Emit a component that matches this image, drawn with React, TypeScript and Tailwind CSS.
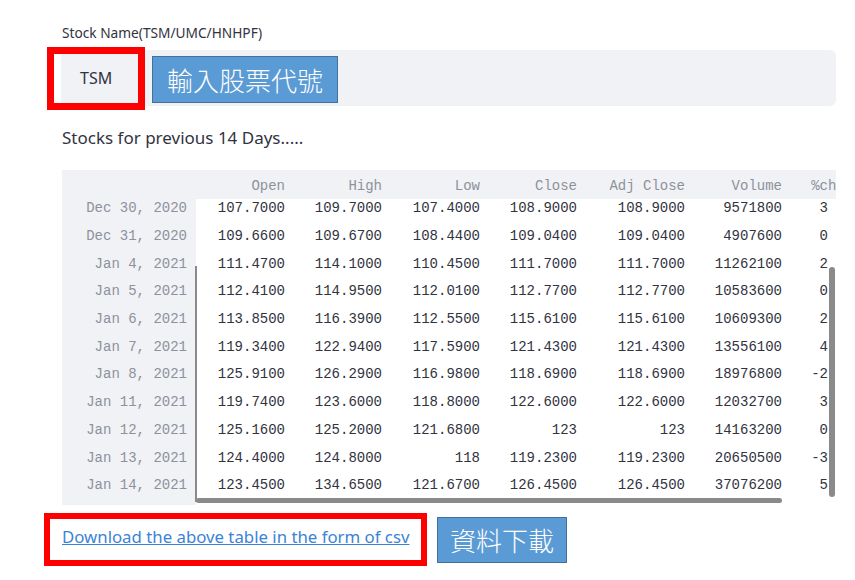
import React from "react";

const cols = [
  { name: "Open", w: 100 },
  { name: "High", w: 97 },
  { name: "Low", w: 98 },
  { name: "Close", w: 97 },
  { name: "Adj Close", w: 108 },
  { name: "Volume", w: 97 },
  { name: "%change", w: 88 },
];

const rows: string[][] = [
  ["Dec 30, 2020", "107.7000", "109.7000", "107.4000", "108.9000", "108.9000", "9571800", "3.2196"],
  ["Dec 31, 2020", "109.6600", "109.6700", "108.4400", "109.0400", "109.0400", "4907600", "0.1286"],
  ["Jan 4, 2021", "111.4700", "114.1000", "110.4500", "111.7000", "111.7000", "11262100", "2.4312"],
  ["Jan 5, 2021", "112.4100", "114.9500", "112.0100", "112.7700", "112.7700", "10583600", "0.9579"],
  ["Jan 6, 2021", "113.8500", "116.3900", "112.5500", "115.6100", "115.6100", "10609300", "2.5183"],
  ["Jan 7, 2021", "119.3400", "122.9400", "117.5900", "121.4300", "121.4300", "13556100", "4.8006"],
  ["Jan 8, 2021", "125.9100", "126.2900", "116.9800", "118.6900", "118.6900", "18976800", "-2.2564"],
  ["Jan 11, 2021", "119.7400", "123.6000", "118.8000", "122.6000", "122.6000", "12032700", "3.2943"],
  ["Jan 12, 2021", "125.1600", "125.2000", "121.6800", "123", "123", "14163200", "0.3263"],
  ["Jan 13, 2021", "124.4000", "124.8000", "118", "119.2300", "119.2300", "20650500", "-3.0650"],
  ["Jan 14, 2021", "123.4500", "134.6500", "121.6700", "126.4500", "126.4500", "37076200", "5.8934"],
];

const sans = { fontFamily: '"Noto Sans", "Open Sans", sans-serif' };
const mono = { fontFamily: '"Liberation Mono", "DejaVu Sans Mono", monospace' };
const cjk = { fontFamily: '"Noto Sans CJK TC", "Noto Sans CJK SC", sans-serif' };

export default function App() {
  return (
    <div className="relative w-[855px] h-[580px] bg-white overflow-hidden text-[#31333f]" style={sans}>
      <div className="ml-[62px] w-[774px] flex flex-col">
        <div className="pt-[25px] h-[41px] text-[13.7px] leading-4 text-[#31333f] whitespace-nowrap">Stock Name(TSM/UMC/HNHPF)</div>

        <div className="relative -ml-px mt-[9px] w-[775px] h-[56px] rounded-md bg-[#f0f2f6] flex items-start">
          <span className="mt-[17px] ml-[19px] w-[72px] text-[16px] leading-[22px] text-[#31333f]">TSM</span>
          <div
            className="mt-[6px] w-[186px] h-[47px] bg-[#5b9bd5] border border-[#41719c] text-white text-[26px] leading-none font-light flex items-center justify-center"
            style={cjk}
          >
            輸入股票代號
          </div>
          <div className="absolute left-[-14px] top-[-3px] w-[98px] h-[63px] border-[7px] border-[#ff0000]" />
        </div>

        <div className="mt-[20px] h-6 text-[17px] leading-6 text-[#31333f] whitespace-nowrap">Stocks for previous 14 Days.....</div>

        <div className="relative mt-[20px] w-[774px] h-[335px] overflow-hidden bg-[#f0f2f6] text-[14px]" style={mono}>
          <div className="flex h-[29px] items-end pb-[3px] text-[#8e919b] whitespace-nowrap">
            <div className="w-[134px] shrink-0" />
            {cols.map((c) => (
              <div key={c.name} className="shrink-0 text-right pr-[11px] leading-[20px]" style={{ width: c.w }}>
                {c.name}
              </div>
            ))}
          </div>
          <div className="h-[306px] overflow-hidden flex flex-col">
            <div className="-mt-[4px] flex flex-col">
              {rows.map((r) => (
                <div key={r[0]} className="flex h-[27.7px] shrink-0 items-center whitespace-nowrap">
                  <div className="w-[134px] h-full shrink-0 flex items-center justify-end pr-[9px] bg-[#f0f2f6] text-[#8e919b]">
                    {r[0]}
                  </div>
                  {cols.map((c, i) => (
                    <div
                      key={c.name}
                      className="h-full shrink-0 flex items-center justify-end pr-[11px] bg-white text-[#31333f]"
                      style={{ width: c.w }}
                    >
                      {r[i + 1]}
                    </div>
                  ))}
                </div>
              ))}
              <div className="flex h-[14px] shrink-0">
                <div className="w-[134px] bg-[#f0f2f6]" />
                <div className="flex-1 bg-white" />
              </div>
            </div>
          </div>
          <div className="absolute left-[766px] top-[29px] w-[8px] h-[306px] bg-white" />
          <div className="absolute left-[133px] top-[96px] w-[2px] h-[236px] bg-[#8a8a8a]" />
          <div className="absolute left-[134px] top-[328px] w-[586px] h-[5px] rounded-full bg-[#8a8a8a]" />
          <div className="absolute left-[767px] top-[97px] w-[6px] h-[230px] rounded-full bg-[#8a8a8a]" />
        </div>

        <div className="relative mt-[12px] h-[46px] flex items-center">
          <a href="#" className="w-[375px] shrink-0 -mt-[6px] text-[16.8px] leading-6 text-[#3a84d6] underline whitespace-nowrap">
            Download the above table in the form of csv
          </a>
          <div
            className="w-[130px] h-[46px] bg-[#5b9bd5] border border-[#41719c] text-white text-[26px] leading-none font-light flex items-center justify-center"
            style={cjk}
          >
            資料下載
          </div>
          <div className="absolute left-[-18px] top-[-4px] w-[383px] h-[53px] border-[6px] border-[#ff0000]" />
        </div>
      </div>
    </div>
  );
}
